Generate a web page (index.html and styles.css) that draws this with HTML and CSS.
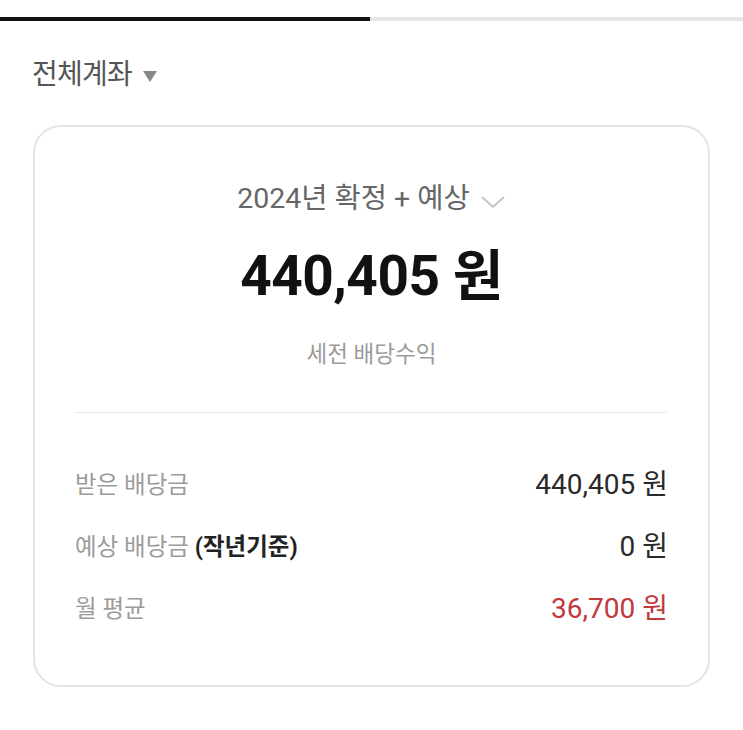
FILE: index.html
```html
<!DOCTYPE html>
<html lang="ko">
<head>
<meta charset="utf-8">
<link rel="stylesheet" href="styles.css">
</head>
<body>
<div class="progress"><div class="progress-fill"></div></div>
<div class="account">
  <span class="account-name">전체계좌</span>
  <span class="account-caret"></span>
</div>
<section class="card">
  <div class="period">
    <span>2024년 확정 + 예상</span>
    <svg class="chevron" width="26" height="14" viewBox="0 0 26 14"><path d="M2 2 L13 12 L24 2" fill="none" stroke="#c4c4c4" stroke-width="2"/></svg>
  </div>
  <div class="total">440,405 원</div>
  <div class="total-label">세전 배당수익</div>
  <div class="divider"></div>
  <div class="rows">
    <div class="row"><span class="label">받은 배당금</span><span class="value">440,405 원</span></div>
    <div class="row"><span class="label">예상 배당금 <b>(작년기준)</b></span><span class="value">0 원</span></div>
    <div class="row"><span class="label">월 평균</span><span class="value red">36,700 원</span></div>
  </div>
</section>
</body>
</html>
```
FILE: styles.css
```css
* { box-sizing: border-box; }
body {
  margin: 0;
  background: #fff;
  font-family: Roboto, "Noto Sans CJK KR", sans-serif;
  width: 743px;
}
.progress {
  margin-top: 17px;
  height: 4px;
  background: #e6e6e6;
}
.progress-fill {
  width: 370px;
  height: 4px;
  background: #111;
}
.account {
  display: flex;
  align-items: center;
  gap: 11px;
  padding: 19px 0 0 32px;
  height: 89px;
}
.account-name {
  font-size: 28px;
  color: #555;
  letter-spacing: -0.8px;
  line-height: 32px;
}
.account-caret {
  width: 0;
  height: 0;
  border-left: 7px solid transparent;
  border-right: 7px solid transparent;
  border-top: 11px solid #888;
  margin-top: 3px;
}
.card {
  margin: 15px 33px 0 33px;
  border: 2px solid #e4e4e4;
  border-radius: 28px;
  padding: 54px 40px 50px;
  height: 562px;
}
.period {
  display: flex;
  justify-content: center;
  align-items: center;
  gap: 10px;
  font-size: 28.5px;
  color: #666;
  line-height: 36px;
}
.chevron { margin-top: 6px; }
.total {
  text-align: center;
  font-size: 55px;
  font-weight: 700;
  color: #111;
  margin-top: 27px;
  line-height: 64px;
  letter-spacing: -0.5px;
}
.total-label {
  text-align: center;
  font-size: 22.5px;
  color: #9a9a9a;
  margin-top: 31px;
  line-height: 30px;
}
.divider {
  height: 1px;
  background: #ececec;
  margin-top: 43px;
}
.rows {
  display: flex;
  flex-direction: column;
  gap: 30px;
  margin-top: 56px;
}
.row {
  display: flex;
  justify-content: space-between;
  align-items: center;
  line-height: 32px;
}
.label {
  font-size: 23.5px;
  color: #9b9b9b;
}
.label b {
  color: #222;
  font-weight: 700;
}
.value {
  font-size: 28px;
  color: #2a2a2a;
}
.value.red { color: #c0393b; }
```
